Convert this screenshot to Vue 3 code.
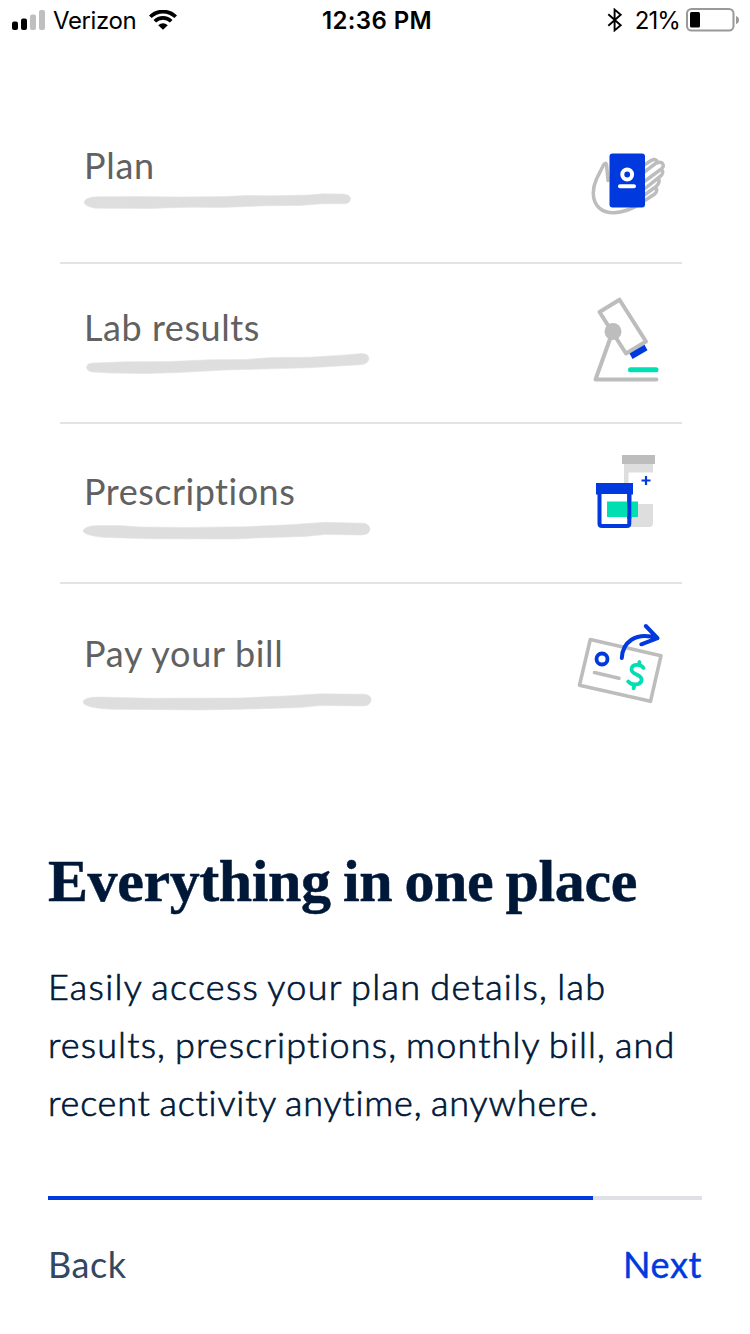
<script setup>
const rows = [
  {
    id: 'plan',
    title: 'Plan',
    top: 104,
    brush: 'M84 202 Q85 197.500 96 196.800 L140 196.600 L180 197 L225 196.500 L246 195.500 L272 195.800 L308 195 L323 193.800 L343 194 Q350 194.500 350.500 198.500 Q350.500 203 345 203.800 L322 203.800 L300 205.500 L265 205.800 L220 207.600 L190 207.200 L150 208.400 L95 208.200 Q84 206 84 202 Z'
  },
  {
    id: 'lab',
    title: 'Lab results',
    top: 264,
    brush: 'M86.500 367 Q87 362.800 94 363 L125 361.800 L170 361.600 L210 359.700 L245 359.500 L272 357.600 L310 357.200 L345 354.900 L362 353.400 Q369 353.700 369 359 Q368 364.500 360 364.700 L335 366.300 L309 367.800 L280 368.600 L225 370 L180 372.500 L145 373.600 L110 373 L92 372 Q86.500 371 86.500 367 Z'
  },
  {
    id: 'rx',
    title: 'Prescriptions',
    top: 424,
    brush: 'M83 531 Q84 526.200 97 525.600 L120 525.600 L140 527 L190 527.400 L245 526.700 L290 524.700 L325 522.300 L364 523.300 Q370 524.500 370 529.500 Q369 535 361 535 L325 534.500 L305 536.500 L255 538 L235 539 L150 538.800 L105 537.400 Q85 536 83 531 Z'
  },
  {
    id: 'bill',
    title: 'Pay your bill',
    top: 584,
    brush: 'M83 702 Q84 697 99 697 L150 698.200 L240 698 L290 695.700 L320 693.800 L365 694.200 Q371 695 371.300 700 Q370 706 363 706 L320 705.600 L300 707.600 L240 709.300 L200 710 L110 709.200 Q84 708 83 702 Z'
  }
]

const progress = 83.33
</script>

<template>
  <main class="screen">
    <header class="status">
      <div class="side">
        <svg class="signal" width="34" height="20" viewBox="0 0 34 20">
          <rect x="0" y="11.500" width="6" height="8.500" rx="2" />
          <rect x="9" y="8.500" width="6" height="11.500" rx="2" />
          <rect class="off" x="18" y="4.500" width="6" height="15.500" rx="2" />
          <rect class="off" x="27" y="0" width="6" height="20" rx="2" />
        </svg>
        <span class="carrier">Verizon</span>
        <svg class="wifi" width="28" height="20" viewBox="0 0 28 20" fill="none" stroke="#000" stroke-width="3.700">
          <path d="M1.300 6.800 A18 18 0 0 1 26.700 6.800" />
          <path d="M5.800 11.300 A11.700 11.700 0 0 1 22.200 11.300" />
          <path d="M14 19.800 L9.200 15.200 Q14 11.300 18.800 15.200 Z" fill="#000" stroke="none" />
        </svg>
      </div>
      <span class="clock">12:36 PM</span>
      <div class="side right">
        <svg class="bluetooth" width="16" height="24" viewBox="0 0 16 24" fill="none" stroke="#000" stroke-width="1.900">
          <path d="M1.300 6.200 L13.700 17.300 L7.600 22.400 V1.600 L13.700 6.700 L1.300 17.800" />
        </svg>
        <span class="percent">21%</span>
        <svg class="battery" width="54" height="24" viewBox="0 0 54 24">
          <rect x="1" y="1" width="46.500" height="21.500" rx="4.500" fill="none" stroke="#999" stroke-width="2" />
          <rect x="4" y="4" width="10" height="15.500" rx="1.500" />
          <path d="M50 8 Q53 9 53 12 Q53 15 50 16 Z" fill="#999" />
        </svg>
      </div>
    </header>

    <section class="list">
      <div v-for="row in rows" :key="row.id" class="row" :class="row.id">
        <div class="label">
          <h2>{{ row.title }}</h2>
          <svg class="brush" width="330" height="60" :viewBox="`60 ${row.top + 85} 330 60`">
            <path :d="row.brush" fill="#dedede" stroke="#e4e4e4" stroke-width=".6" />
          </svg>
        </div>
        <svg class="icon" width="110" height="158" :viewBox="`565 ${row.top} 110 158`" fill="none" stroke="#bdbdbd" stroke-width="4" stroke-linecap="round" stroke-linejoin="round">
          <template v-if="row.id === 'plan'">
            <g stroke-width="3.500">
              <path d="M608 180.500 L606.500 164.500 Q605.500 162 603.500 165 L596.500 179 Q593.300 186 593.300 193 C593.300 206 602 213 614 212.700 C625 212 634 208 641 203 L654 194.500 Q658.500 191 655.500 187.500" />
              <path d="M645 164.500 L651.500 160.300 Q656.500 158 657.300 162.200 L645 171.500" />
              <path d="M657.300 162.800 Q662.500 161 663.300 165.500 Q663.500 167.500 660 170 L645 181" />
              <path d="M661.500 169.500 Q664.500 173 660 176.500 L645 188.500" />
              <path d="M658.500 178.500 Q660.500 183 655.500 187 L645 194.500" />
            </g>
            <rect x="609.500" y="153.500" width="35.500" height="54" rx="3" fill="#0039dd" stroke="none" />
            <circle cx="627.200" cy="174.500" r="4.900" stroke="#fff" />
            <path d="M620 186.300 H634" stroke="#fff" />
          </template>
          <template v-else-if="row.id === 'lab'">
            <path d="M599.500 312 L619.500 299.700 L646 341.500 L626 353.500 Z" />
            <path d="M612.500 332 L595.500 379.500 H656.500" />
            <circle cx="613" cy="331.500" r="8.500" fill="#bdbdbd" stroke="none" />
            <path d="M629.500 353.500 L644.500 344.800 L647.500 350.300 L632.500 359 Z" fill="#0039dd" stroke="none" />
            <path d="M630.500 369.700 H656" stroke="#00dfb2" stroke-width="5" />
          </template>
          <template v-else-if="row.id === 'rx'">
            <g stroke="none">
              <path d="M624 464 H653 V472.500 H628.500 V504 H653 V523 Q653 527 649 527 H624 Z" fill="#dedede" />
              <rect x="622" y="455" width="33" height="9" fill="#bdbdbd" />
              <rect x="596" y="483" width="37" height="11.500" fill="#0039dd" />
            </g>
            <path d="M599.500 494 V523.500 Q599.500 526 602 526 H626.800 Q629.300 526 629.300 523.500 V494" fill="#fff" stroke="#0039dd" />
            <rect x="607" y="501.500" width="31" height="15.500" fill="#00dfb2" stroke="none" />
            <path d="M629.300 494 V519" stroke="#0039dd" stroke-linecap="butt" />
            <path d="M646 476 V485 M641.500 480.500 H650.500" stroke="#0039dd" stroke-width="2.200" stroke-linecap="butt" />
          </template>
          <template v-else>
            <path d="M590.300 639.500 L661 655.700 L650.500 701.300 L579.500 685.200 Z" stroke-width="3.600" />
            <path d="M594.500 672.500 L619 678.300" stroke-width="3.600" />
            <circle cx="602" cy="659" r="5.500" stroke="#0039dd" stroke-width="3.800" />
            <path d="M621.800 658 C622.500 643 635 631 657 638 M645.800 626 L657.500 638.200 L641.300 644.300" stroke="#0039dd" />
            <path d="M643.500 668 C640.500 663.500 631.800 663.800 631.500 669.300 C631.300 674.800 642 674.200 641.600 679.800 C641 685.800 631.500 685.500 628.200 681.500 M639.500 662 L638.800 665 M634.500 684.500 L633.600 688.300" stroke="#00dfb2" stroke-width="3.800" />
          </template>
        </svg>
      </div>
    </section>

    <section class="copy">
      <h1>Everything in one place</h1>
      <p>
        <span class="l1">Easily access your plan details, lab</span>
        <span class="l2">results, prescriptions, monthly bill, and</span>
        <span class="l3">recent activity anytime, anywhere.</span>
      </p>
    </section>

    <footer>
      <div class="track"><div class="fill" :style="{ width: progress + '%' }"></div></div>
      <nav>
        <button class="back">Back</button>
        <button class="next">Next</button>
      </nav>
    </footer>
  </main>
</template>

<style>
body { background: #fff; }
</style>

<style scoped>
.screen {
  width: 750px;
  height: 1334px;
  overflow: hidden;
  background: #fff;
  font-family: Lato, "Open Sans", sans-serif;
}
.status {
  display: grid;
  grid-template-columns: 1fr auto 1fr;
  height: 40px;
  padding: 0 10px 0 12px;
  font: 24px/30px Inter, "Liberation Sans", sans-serif;
  color: #000;
}
.side { display: flex; align-items: center; }
.right { justify-content: flex-end; }
.off { fill: #bfbfbf; }
.carrier { margin-left: 7px; padding-top: 2px; letter-spacing: -.4px; }
.wifi { margin-left: 13px; }
.clock { padding: 2px 0 0 2px; font-weight: 600; line-height: 38px; letter-spacing: .4px; }
.percent { margin: 0 6px 0 12px; padding-top: 2px; letter-spacing: -.9px; }
.list { margin: 64px 68px 0 60px; }
.row {
  box-sizing: border-box;
  display: grid;
  grid-template-columns: 1fr 110px;
  height: 160px;
  padding-right: 7px;
  border-bottom: 2px solid #e2e3e6;
}
.row:last-child { border-bottom-color: transparent; }
h2 {
  box-sizing: border-box;
  height: 85px;
  margin: 0;
  padding: 39px 0 0 24px;
  font-size: 36px;
  font-weight: 400;
  line-height: 44px;
  letter-spacing: .7px;
  color: #616161;
  white-space: nowrap;
}
.lab h2 { padding-top: 41px; letter-spacing: .55px; }
.rx h2 { padding-top: 45px; letter-spacing: .5px; }
.bill h2 { padding-top: 47px; }
.brush, .icon { display: block; }
.copy { padding: 0 48px; color: #001838; }
h1 {
  margin: 103px 0 0;
  font: 700 60px/68px "Liberation Serif", serif;
  letter-spacing: -.4px;
  word-spacing: -2.3px;
  white-space: nowrap;
  -webkit-text-stroke: .5px #001838;
}
p {
  margin: 42px 0 0;
  font-size: 36px;
  font-weight: 300;
  line-height: 58px;
  word-spacing: -2px;
  -webkit-text-stroke: .7px #001838;
}
p span { display: block; white-space: nowrap; }
.l1 { letter-spacing: 1.3px; }
.l2 { letter-spacing: 1.13px; }
.l3 { letter-spacing: .83px; }
footer { margin: 65px 48px 0; }
.track { height: 4px; background: #dfe1e6; }
.fill { height: 4px; background: #0039dd; }
nav { display: flex; justify-content: space-between; margin-top: 40px; }
button {
  padding: 0;
  border: 0;
  background: none;
  font: 400 36px/48px Lato, sans-serif;
  letter-spacing: .6px;
}
.back { color: #33475f; }
.next { color: #0039dd; -webkit-text-stroke: .4px #0039dd; }
</style>
